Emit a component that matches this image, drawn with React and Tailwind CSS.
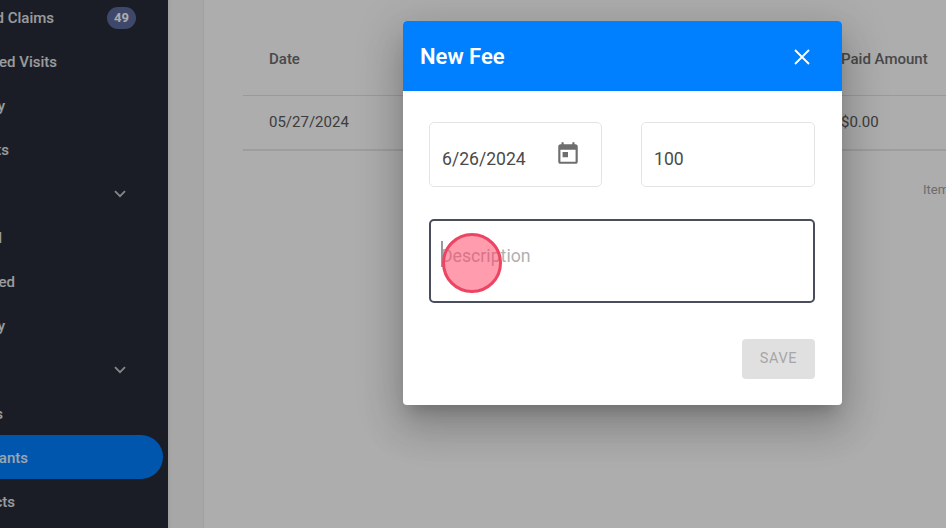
const navItems = [
  { text: "Unbilled Claims", end: "w-[54px]", badge: "49" },
  { text: "Unsubmitted Visits", end: "w-[57px]" },
  { text: "History", end: "w-[5px]" },
  { text: "Reports", end: "w-[9px]" },
  { text: "Fees", end: "w-[1px]", chevron: true, hideText: true },
  { text: "Pending Approval", end: "w-[2px]" },
  { text: "Approved", end: "w-[15px]" },
  { text: "Company", end: "w-[5px]" },
  { text: "Admin", end: "w-[1px]", chevron: true, hideText: true },
  { text: "Settings", end: "w-[3px]" },
  { text: "Participants", end: "w-[28px]", active: true },
  { text: "Contacts", end: "w-[15px]" },
];

function Chevron() {
  return (
    <svg width="12" height="8" viewBox="0 0 12 8" fill="none" stroke="#c4c6cc" strokeWidth="1.8" className="absolute left-[114px] top-[19px]">
      <path d="M1 1.2 L6 6.2 L11 1.2" />
    </svg>
  );
}

function NavRow({ item }) {
  return (
    <div
      className={`relative h-[44px] w-[163px] flex items-center shrink-0 rounded-r-[22px] ${
        item.active ? "bg-[#007fff]" : ""
      }`}
    >
      {!item.hideText && (
        <div className={`flex justify-end mt-[2px] ${item.end}`}>
          <span className={`whitespace-nowrap text-[15px] font-medium ${item.active ? "text-[#e6f2ff]" : "text-[#e4e5e8]"}`}>
            {item.text}
          </span>
        </div>
      )}
      {item.badge && (
        <span className="absolute left-[107px] top-[12px] w-[29px] h-[22px] rounded-full bg-[#5a6a9e] text-white text-[13px] font-bold flex items-center justify-center">
          {item.badge}
        </span>
      )}
      {item.chevron && <Chevron />}
    </div>
  );
}

export default function App() {
  return (
    <div className="relative w-[946px] h-[528px] overflow-hidden flex bg-white" style={{ fontFamily: "Roboto, sans-serif" }}>
      <aside className="relative w-[168px] shrink-0 bg-[#282c38] flex flex-col -mt-[5px] h-[540px] overflow-hidden">
        {navItems.map((item) => (
          <NavRow key={item.text} item={item} />
        ))}
      </aside>

      <div className="w-[36px] shrink-0 bg-[#f7f7f7] border-r border-[#ececec] shadow-[inset_4px_0_4px_-3px_rgba(0,0,0,0.08)]" />

      <main className="flex-1 min-w-0 bg-white pt-[38px] pl-[39px] overflow-hidden">
        <div className="w-[720px] border-b-2 border-[#e8e8e8]">
          <div className="h-[58px] pb-[15px] flex items-center border-b border-[#e4e4e4] text-[15px] font-medium text-[#6c6c6c] whitespace-nowrap">
            <span className="pl-[26px] w-[598px]">Date</span>
            <span>Paid Amount</span>
          </div>
          <div className="h-[53px] flex items-center text-[15px] text-[#5a5a5a] whitespace-nowrap">
            <span className="pl-[26px] w-[598px]">05/27/2024</span>
            <span>$0.00</span>
          </div>
        </div>
        <div className="pt-[29px] pl-[680px] text-[13px] text-[#a0a0a0] whitespace-nowrap">Items</div>
      </main>

      <div className="absolute inset-0 bg-black/32" />

      <div className="absolute left-[403px] top-[21px] w-[439px] h-[384px] bg-white rounded-[4px] overflow-hidden flex flex-col shadow-[0_11px_15px_-7px_rgba(0,0,0,0.2),0_24px_38px_3px_rgba(0,0,0,0.14),0_9px_46px_8px_rgba(0,0,0,0.12)]">
        <header className="h-[70px] shrink-0 bg-[#0080ff] flex items-center justify-between pl-[17px] pr-[31px]">
          <h2 className="text-[22px] font-semibold text-white">New Fee</h2>
          <svg width="18" height="18" viewBox="0 0 18 18" stroke="white" strokeWidth="1.8" fill="none" className="mt-[2px]">
            <path d="M2 2 L16 16 M16 2 L2 16" />
          </svg>
        </header>
        <div className="flex-1 flex flex-col pt-[31px] pl-[26px] pr-[27px]">
          <div className="flex justify-between">
            <div className="w-[173px] h-[65px] border border-[#e4e4e4] rounded-[5px] flex items-center justify-between pl-[12px] pr-[20px] text-[17.6px] text-[#4a4a4a]">
              <span className="mt-[9px]">6/26/2024</span>
              <svg width="26" height="26" viewBox="0 0 24 24" fill="#6e6e6e" className="-mt-[3px]">
                <path d="M19 4h-1V2h-2v2H8V2H6v2H5c-1.11 0-1.99.9-1.99 2L3 20c0 1.1.89 2 2 2h14c1.1 0 2-.9 2-2V6c0-1.1-.9-2-2-2zm0 16H5V9h14v11zM7 11h5v5H7z" />
              </svg>
            </div>
            <div className="w-[174px] h-[65px] border border-[#e4e4e4] rounded-[5px] flex items-center pl-[12px] text-[17.6px] text-[#4a4a4a]">
              <span className="mt-[9px]">100</span>
            </div>
          </div>
          <div className="relative mt-[32px] h-[84px] border-2 border-[#4a4e5c] rounded-[5px] pl-[10px] pt-[22px] text-[17.7px] leading-[26px] text-[#b0b0b0]">
            Description
            <span className="absolute left-[10px] top-[20px] w-[2px] h-[26px] bg-[#999]" />
          </div>
          <div className="flex justify-end mt-[36px]">
            <button className="w-[73px] h-[40px] rounded-[4px] bg-[#e0e0e0] text-[#a6a6a6] text-[14.5px] font-normal tracking-[0.6px]">SAVE</button>
          </div>
        </div>
      </div>

      <div className="absolute left-[442px] top-[233px] w-[60px] h-[60px] rounded-full bg-[#ff3a5e]/50 border-[3px] border-[#ec4463]" />
    </div>
  );
}
